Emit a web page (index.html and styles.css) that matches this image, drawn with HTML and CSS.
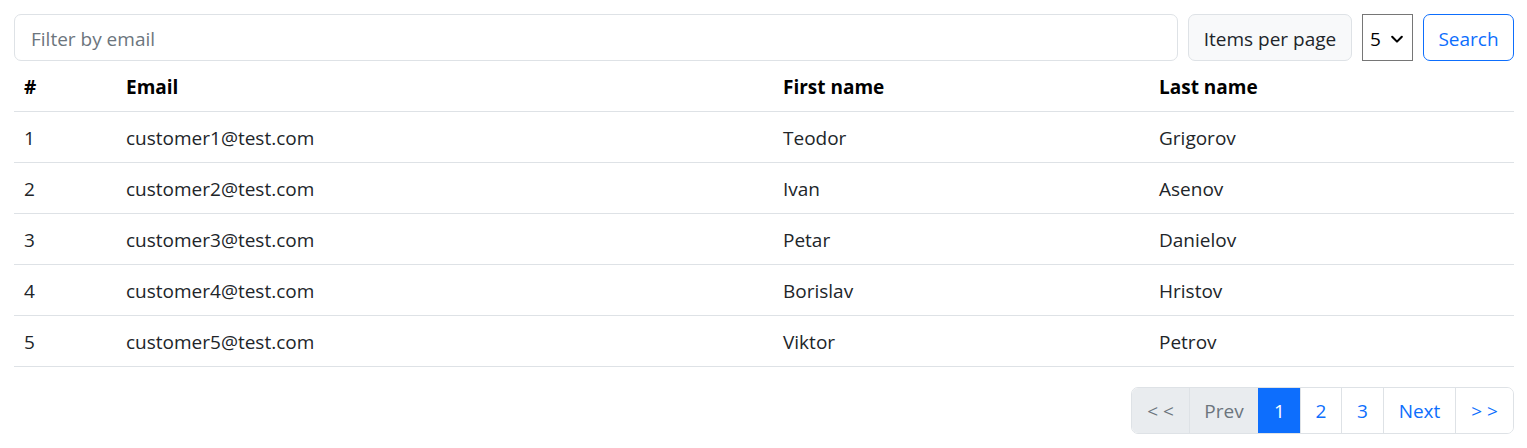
FILE: index.html
```html
<!DOCTYPE html>
<html>
<head>
<meta charset="utf-8">
<link rel="stylesheet" href="styles.css">
</head>
<body>
<div class="page">
  <div class="toolbar">
    <input class="filter" type="text" placeholder="Filter by email">
    <span class="label">Items per page</span>
    <div class="select">
      <span>5</span>
      <svg width="14" height="14" viewBox="0 0 16 16"><path d="M2.5 5.5 8 11l5.5-5.5" fill="none" stroke="#000" stroke-width="2.4" stroke-linecap="round" stroke-linejoin="round"/></svg>
    </div>
    <button class="search">Search</button>
  </div>
  <table class="grid">
    <thead>
      <tr><th class="c1">#</th><th class="c2">Email</th><th class="c3">First name</th><th class="c4">Last name</th></tr>
    </thead>
    <tbody>
      <tr><td>1</td><td>customer1@test.com</td><td>Teodor</td><td>Grigorov</td></tr>
      <tr><td>2</td><td>customer2@test.com</td><td>Ivan</td><td>Asenov</td></tr>
      <tr><td>3</td><td>customer3@test.com</td><td>Petar</td><td>Danielov</td></tr>
      <tr><td>4</td><td>customer4@test.com</td><td>Borislav</td><td>Hristov</td></tr>
      <tr><td>5</td><td>customer5@test.com</td><td>Viktor</td><td>Petrov</td></tr>
    </tbody>
  </table>
  <div class="pager-row">
    <ul class="pager">
      <li class="pg disabled w58">&lt; &lt;</li>
      <li class="pg disabled w69">Prev</li>
      <li class="pg active w42">1</li>
      <li class="pg w41">2</li>
      <li class="pg w42">3</li>
      <li class="pg w72">Next</li>
      <li class="pg w59">&gt; &gt;</li>
    </ul>
  </div>
</div>
</body>
</html>
```
FILE: styles.css
```css
* { box-sizing: border-box; }
html, body { margin: 0; padding: 0; background: #fff; }
body {
  font-family: "Segoe UI", "Open Sans", "Noto Sans", sans-serif;
  font-size: 19px;
  line-height: 30px;
  color: #212529;
}
.page { padding: 14px 13px 0 14px; }
.toolbar { display: flex; height: 47px; gap: 10px; }
.filter {
  flex: 1;
  height: 47px;
  border: 1px solid #dee2e6;
  border-radius: 7px;
  padding: 8px 16px 6px;
  font: inherit;
  color: #212529;
  outline: none;
}
.filter::placeholder { color: #6c757d; }
.label {
  width: 164px;
  display: flex; align-items: center; justify-content: center;
  padding-top: 2px;
  background: #f8f9fa;
  border: 1px solid #dee2e6;
  border-radius: 7px;
}
.select {
  width: 51px;
  border: 1px solid #767676;
  display: flex; align-items: center; justify-content: space-between;
  padding: 2px 8px 0 7px;
  color: #000;
}
.select svg { display: block; }
.search {
  width: 91px;
  font: inherit;
  color: #0d6efd;
  background: #fff;
  border: 1px solid #0d6efd;
  border-radius: 7px;
  padding: 2px 0 0;
}
.grid { width: 100%; border-collapse: collapse; table-layout: fixed; }
.grid th, .grid td {
  text-align: left;
  padding: 11px 10px 9px;
  border-bottom: 1px solid #dee2e6;
  height: 51px;
}
.grid th { font-weight: 700; color: #000; height: 50px; padding-top: 11px; padding-bottom: 8px; }
.c1 { width: 102px; }
.c2 { width: 657px; }
.c3 { width: 376px; }
.pager-row { display: flex; justify-content: flex-end; margin-top: 20px; }
.pager {
  display: flex; list-style: none; margin: 0; padding: 0;
  border: 1px solid #dee2e6; border-radius: 7px; overflow: hidden;
  height: 47px;
}
.pg {
  display: flex; align-items: center; justify-content: center;
  padding-top: 2px;
  color: #0d6efd;
  background: #fff;
  border-left: 1px solid #dee2e6;
}
.pg:first-child { border-left: 0; }
.pg.disabled { background: #e9ecef; color: #6c757d; }
.pg.active { background: #0d6efd; color: #fff; border-left-color: #0d6efd; }
.w58 { width: 57px; }
.w69 { width: 69px; }
.w42 { width: 42px; }
.w41 { width: 41px; }
.w72 { width: 72px; }
.w59 { width: 58px; }
```
